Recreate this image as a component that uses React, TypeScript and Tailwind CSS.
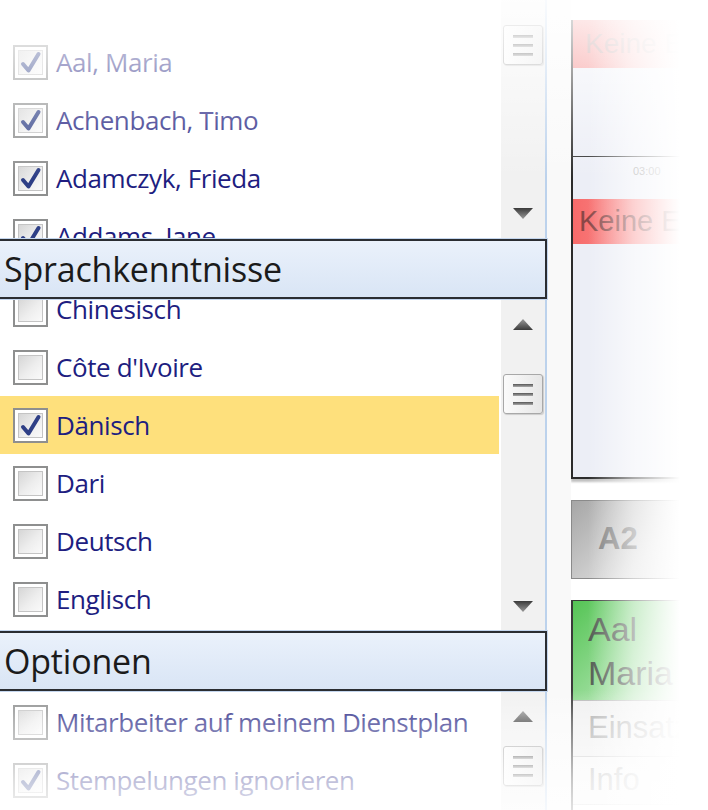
import React from "react";

const listFont = { fontFamily: '"Open Sans", "Noto Sans", sans-serif' };

function Check({ checked }: { checked: boolean }) {
  return (
    <div className="relative w-[35px] h-[35px] shrink-0 border-2 border-[#8e8f8f] bg-white p-[3px]">
      <div className="w-full h-full border border-[#c4c4c4] bg-[linear-gradient(135deg,#d6d6d6_0%,#eeeeee_55%,#fafafa_100%)]" />
      {checked && (
        <svg className="absolute left-[5px] top-[4px]" width="22" height="24" viewBox="0 0 22 24">
          <path d="M3 13 L8.5 19.5 L18.5 3" fill="none" stroke="#2e3f86" strokeWidth="4" strokeLinecap="round" strokeLinejoin="round" />
        </svg>
      )}
    </div>
  );
}

function Row({ label, checked, selected }: { label: string; checked: boolean; selected?: boolean }) {
  return (
    <div
      className={`h-[58px] shrink-0 flex items-center gap-[8px] pl-[13px] w-[499px] ${selected ? "bg-[#fee07c]" : ""}`}
    >
      <Check checked={checked} />
      <span className="text-[26px] leading-none text-[#201d80] whitespace-nowrap tracking-[-0.4px]" style={listFont}>
        {label}
      </span>
    </div>
  );
}

function Arrow({ up }: { up?: boolean }) {
  return (
    <svg width="20" height="11" viewBox="0 0 20 11">
      <defs>
        <linearGradient id={up ? "au" : "ad"} x1="0" y1="0" x2="0" y2="1">
          <stop offset="0" stopColor={up ? "#9a9a9a" : "#3a3a3a"} />
          <stop offset="1" stopColor={up ? "#3a3a3a" : "#9a9a9a"} />
        </linearGradient>
      </defs>
      <path d={up ? "M10 0 L20 11 L0 11 Z" : "M0 0 L20 0 L10 11 Z"} fill={`url(#${up ? "au" : "ad"})`} />
    </svg>
  );
}

function Thumb() {
  return (
    <div className="w-[40px] h-[40px] rounded-[3px] border border-[#a8a8a8] bg-[linear-gradient(to_right,#fbfbfb,#e6e6e6)] flex flex-col items-center justify-center gap-[6px] shadow-[1px_1px_1px_rgba(0,0,0,0.15)]">
      <div className="w-[20px] h-[3px] bg-[linear-gradient(to_bottom,#555,#aaa)]" />
      <div className="w-[20px] h-[3px] bg-[linear-gradient(to_bottom,#555,#aaa)]" />
      <div className="w-[20px] h-[3px] bg-[linear-gradient(to_bottom,#555,#aaa)]" />
    </div>
  );
}

function Scrollbar({
  showUp,
  thumbTop,
  showDown,
}: {
  showUp: boolean;
  thumbTop: number;
  showDown: boolean;
}) {
  return (
    <div className="w-[46px] shrink-0 flex bg-[#f1f1f1]">
      <div className="w-[44px] flex flex-col items-center">
        {showUp && (
          <div className="h-[50px] w-full flex items-center justify-center shrink-0">
            <Arrow up />
          </div>
        )}
        <div className="flex-1 w-full flex flex-col items-center">
          <div style={{ height: thumbTop }} className="shrink-0" />
          <Thumb />
        </div>
        {showDown && (
          <div className="h-[50px] w-full flex items-center justify-center shrink-0">
            <Arrow />
          </div>
        )}
      </div>
      <div className="w-[2px] bg-[#bcd2ec]" />
    </div>
  );
}

function Header({ title }: { title: string }) {
  return (
    <div className="h-[60px] shrink-0 border-y-2 border-r-2 border-[#2a2d32] bg-[linear-gradient(to_bottom,#eaf1fb,#d9e5f5)] flex items-center pl-[4px] shadow-[0_0_0_1px_#c4d6ee] relative z-10">
      <span className="text-[34px] leading-none text-[#1b1b1b] whitespace-nowrap tracking-[-0.2px]" style={{ fontFamily: '"Open Sans", "Noto Sans", sans-serif' }}>
        {title}
      </span>
    </div>
  );
}

export default function App() {
  return (
    <div className="relative w-[708px] h-[810px] overflow-hidden bg-white flex">
      {/* Left panel */}
      <div className="w-[547px] shrink-0 flex flex-col">
        {/* Section 1 */}
        <div className="h-[239px] shrink-0 flex overflow-hidden">
          <div className="flex-1 flex flex-col pt-[33px] overflow-hidden">
            <Row label="Aal, Maria" checked />
            <Row label="Achenbach, Timo" checked />
            <Row label="Adamczyk, Frieda" checked />
            <Row label="Addams, Jane" checked />
          </div>
          <div className="flex">
            <div className="w-[44px] flex flex-col items-center bg-[#f1f1f1]">
              <div className="h-[25px] shrink-0" />
              <Thumb />
              <div className="flex-1" />
              <div className="h-[52px] w-full flex items-center justify-center shrink-0">
                <Arrow />
              </div>
            </div>
            <div className="w-[2px] bg-[#bcd2ec]" />
          </div>
        </div>
        <Header title="Sprachkenntnisse" />
        {/* Section 2 */}
        <div className="h-[332px] shrink-0 flex">
          <div className="flex-1 overflow-hidden">
            <div className="flex flex-col mt-[-19px]">
              <Row label="Chinesisch" checked={false} />
              <Row label="Côte d'Ivoire" checked={false} />
              <Row label="Dänisch" checked selected />
              <Row label="Dari" checked={false} />
              <Row label="Deutsch" checked={false} />
              <Row label="Englisch" checked={false} />
            </div>
          </div>
          <Scrollbar showUp thumbTop={25} showDown />
        </div>
        <Header title="Optionen" />
        {/* Section 3 */}
        <div className="flex-1 flex">
          <div className="flex-1 flex flex-col pt-[2px] overflow-hidden">
            <Row label="Mitarbeiter auf meinem Dienstplan" checked={false} />
            <Row label="Stempelungen ignorieren" checked />
          </div>
          <Scrollbar showUp thumbTop={5} showDown={false} />
        </div>
      </div>

      {/* gap */}
      <div className="w-[24px] shrink-0 bg-[#f9f9f9]" />

      {/* Right column */}
      <div className="flex-1 min-w-0 overflow-hidden flex flex-col whitespace-nowrap" style={{ fontFamily: '"Liberation Sans", Arial, sans-serif' }}>
        <div className="mt-[20px] h-[459px] shrink-0 border-l-2 border-b-2 border-[#2b2b2b] bg-[#eceef6] flex flex-col shadow-[0_3px_2px_rgba(0,0,0,0.25)]">
          <div className="h-[48px] shrink-0 bg-[linear-gradient(to_right,#f47f7f,#fbd0d0)] flex items-center pl-[12px]">
            <span className="text-[28px] text-[#b48a8a]">Keine Einsätze</span>
          </div>
          <div className="h-[89px] shrink-0 border-b border-[#333]" />
          <div className="h-[42px] shrink-0 flex items-start pl-[60px] pt-[6px]">
            <span className="text-[11px] text-[#8c8c8c]">03:00</span>
          </div>
          <div className="h-[45px] shrink-0 bg-[linear-gradient(to_right,#f76a6a,#fbb5b5)] flex items-center pl-[6px]">
            <span className="text-[29px] text-[#8a4747]">Keine Einsätze</span>
          </div>
          <div className="flex-1" />
        </div>
        <div className="mt-[21px] h-[79px] shrink-0 border border-[#8a8a8a] bg-[linear-gradient(135deg,#a6a6a6,#dedede_60%,#eeeeee)] flex items-center pl-[26px]">
          <span className="text-[31px] font-bold text-[#7b7b7b]">A2</span>
        </div>
        <div className="mt-[21px] flex-1 border-l-2 border-t border-[#3a3a3a] flex flex-col">
          <div className="h-[100px] shrink-0 bg-[linear-gradient(135deg,#55c455,#a8e2a8_60%,#d8f2d8)] flex flex-col justify-center pl-[15px] border-b border-[#bbb]">
            <span className="text-[34px] leading-[44px] text-[#505a50]">Aal</span>
            <span className="text-[34px] leading-[44px] text-[#505a50]">Maria</span>
          </div>
          <div className="h-[56px] shrink-0 bg-[#f0f0f0] border-b border-[#c8c8c8] flex items-center pl-[15px]">
            <span className="text-[31px] text-[#a5a5a5]">Einsatz</span>
          </div>
          <div className="h-[48px] shrink-0 bg-[#f6f6f6] border-b border-[#d0d0d0] flex items-center pl-[15px]">
            <span className="text-[31px] text-[#b0b0b0]">Info</span>
          </div>
          <div className="flex-1" />
        </div>
      </div>

      {/* fades */}
      <div className="pointer-events-none absolute left-0 top-0 w-[708px] h-[190px] bg-[linear-gradient(to_bottom,rgba(255,255,255,0.9)_0px,rgba(255,255,255,0.62)_62px,rgba(255,255,255,0.3)_120px,rgba(255,255,255,0)_178px)]" />
      <div className="pointer-events-none absolute left-0 top-[690px] w-[708px] h-[120px] bg-[linear-gradient(to_bottom,rgba(255,255,255,0)_0px,rgba(255,255,255,0.35)_32px,rgba(255,255,255,0.72)_91px,rgba(255,255,255,0.85)_120px)]" />
      <div className="pointer-events-none absolute left-[588px] top-0 w-[120px] h-[810px] bg-[linear-gradient(to_right,rgba(255,255,255,0)_0px,rgba(255,255,255,0.6)_45px,#fff_92px)]" />
    </div>
  );
}
